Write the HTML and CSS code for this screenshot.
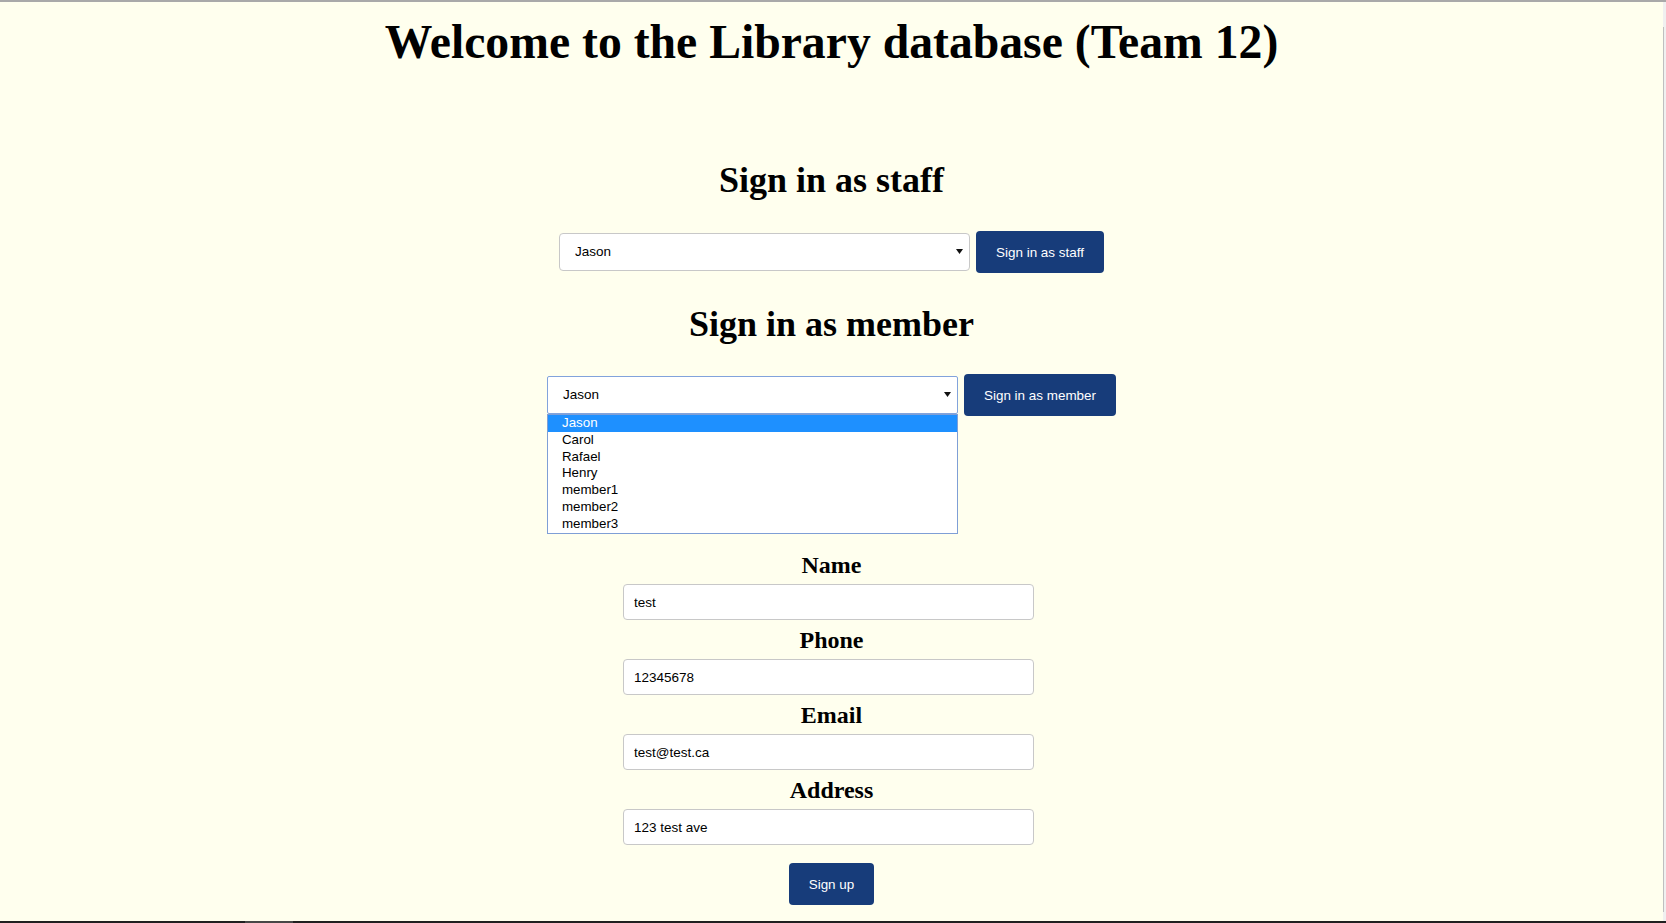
FILE: index.html
```html
<!DOCTYPE html>
<html lang="en">
<head>
<meta charset="utf-8">
<title>Library database</title>
<link rel="stylesheet" href="styles.css">
</head>
<body>
<div class="window">
  <div class="topline"></div>
  <div class="middle">
    <main class="page">
      <h1 class="title">Welcome to the Library database (Team 12)</h1>

      <h2 class="section-title staff-title">Sign in as staff</h2>
      <div class="signin-row staff-row">
        <div class="select-wrap">
          <select class="select">
            <option>Jason</option>
            <option>Carol</option>
            <option>Rafael</option>
            <option>Henry</option>
          </select>
          <svg class="select-arrow" width="7" height="5" viewBox="0 0 7 5"><path d="M0 0H7L3.5 5Z" fill="#111"/></svg>
        </div>
        <button class="btn">Sign in as staff</button>
      </div>

      <h2 class="section-title member-title">Sign in as member</h2>
      <div class="signin-row member-row">
        <div class="select-wrap">
          <div class="select select-open">Jason</div>
          <svg class="select-arrow" width="7" height="5" viewBox="0 0 7 5"><path d="M0 0H7L3.5 5Z" fill="#111"/></svg>
          <ul class="dropdown">
            <li class="option selected">Jason</li>
            <li class="option">Carol</li>
            <li class="option">Rafael</li>
            <li class="option">Henry</li>
            <li class="option">member1</li>
            <li class="option">member2</li>
            <li class="option">member3</li>
          </ul>
        </div>
        <button class="btn">Sign in as member</button>
      </div>

      <form class="signup">
        <label class="field-label">Name</label>
        <input class="field" type="text" value="test">
        <label class="field-label">Phone</label>
        <input class="field" type="text" value="12345678">
        <label class="field-label">Email</label>
        <input class="field" type="text" value="test@test.ca">
        <label class="field-label">Address</label>
        <input class="field" type="text" value="123 test ave">
        <button class="btn signup-btn" type="button">Sign up</button>
      </form>
    </main>
    <div class="scrollbar"><div class="thumb"></div></div>
  </div>
  <div class="taskbar"><div class="task"></div></div>
</div>
</body>
</html>
```
FILE: styles.css
```css
* { box-sizing: border-box; }

html, body {
  margin: 0;
  padding: 0;
  height: 100%;
  overflow: hidden;
}

.window {
  height: 100vh;
  display: grid;
  grid-template-rows: 2px 1fr 2px;
  background: #ffffee;
}

.topline {
  background: #a9a9a9;
}

.middle {
  display: flex;
  min-height: 0;
}

.page {
  flex: 1;
  display: flex;
  flex-direction: column;
  align-items: center;
  background: #ffffee;
  color: #000;
  font-family: "Liberation Serif", "Times New Roman", serif;
}

.scrollbar {
  width: 3px;
  background: #f0f0f0;
}

.thumb {
  width: 1px;
  margin-top: 25px;
  height: 885px;
  background: #bfbfbf;
}

.taskbar {
  background: #202020;
  padding-left: 245px;
}

.task {
  width: 48px;
  height: 100%;
  background: #474747;
}

.title {
  margin: 12px 0 0;
  font-size: 47.7px;
  line-height: 56px;
  font-weight: bold;
}

.section-title {
  margin: 0;
  font-size: 36px;
  line-height: 44px;
  font-weight: bold;
}

.staff-title { margin-top: 88px; }
.member-title { margin-top: 29px; }

.signin-row {
  display: flex;
  align-items: center;
  gap: 6px;
  height: 42px;
}

.staff-row { margin-top: 29px; }
.member-row { margin-top: 28px; gap: 6px; }

.select-wrap {
  position: relative;
  width: 411px;
  height: 38px;
}

.select {
  appearance: none;
  -webkit-appearance: none;
  display: block;
  width: 100%;
  height: 38px;
  margin: 0;
  padding: 0 24px 0 15px;
  border: 1px solid #c8c8c8;
  border-radius: 4px;
  background: #fff;
  color: #000;
  font-family: "Liberation Sans", Arial, sans-serif;
  font-size: 13.5px;
  line-height: 36px;
  text-align: left;
}

.select-open {
  border-color: #82a3dc;
  border-radius: 2px;
}

.select-arrow {
  position: absolute;
  right: 7px;
  top: 16px;
}

.dropdown {
  position: absolute;
  left: 0;
  top: 38px;
  width: 100%;
  margin: 0;
  padding: 0;
  list-style: none;
  background: #fff;
  border: 1px solid #7f9fd6;
  text-align: left;
  z-index: 5;
}

.option {
  padding-left: 14px;
  height: 16.8px;
  line-height: 16.8px;
  font-family: "Liberation Sans", Arial, sans-serif;
  font-size: 13.33px;
  color: #000;
}

.option.selected {
  background: #1e90ff;
  color: #fff;
}

.btn {
  height: 42px;
  padding: 0 20px;
  border: none;
  border-radius: 4px;
  background: #173c7a;
  color: #fff;
  font-family: "Liberation Sans", Arial, sans-serif;
  font-size: 13.45px;
  cursor: pointer;
}

.signup {
  margin-top: 135px;
  display: flex;
  flex-direction: column;
  align-items: center;
}

.field-label {
  display: block;
  font-size: 24px;
  line-height: 28px;
  font-weight: bold;
}

.field {
  display: block;
  width: 411px;
  height: 36px;
  margin: 5px 6px 6px 0;
  padding: 0 10px;
  border: 1px solid #c8c8c8;
  border-radius: 4px;
  background: #fff;
  color: #000;
  font-family: "Liberation Sans", Arial, sans-serif;
  font-size: 13.5px;
}

.signup-btn {
  margin-top: 12px;
}
```
